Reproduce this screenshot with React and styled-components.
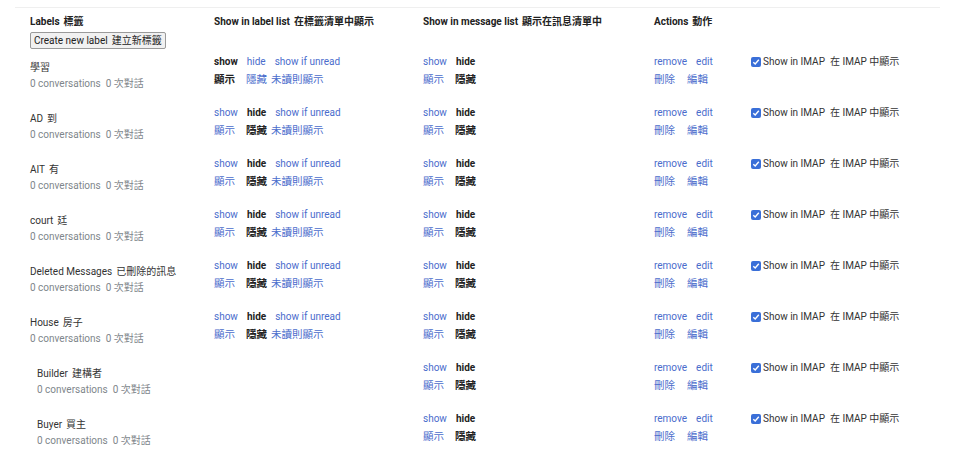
import React from "react";
import styled, { createGlobalStyle } from "styled-components";

const GlobalStyle = createGlobalStyle`
  body {
    margin: 0;
    background: #fff;
    font-family: Roboto, "Noto Sans CJK TC", "Noto Sans", sans-serif;
    font-size: 10px;
    color: #222;
  }
`;

const Page = styled.div`
  margin: 7px 20px 0 15px;
  border-top: 1px solid #efefef;
  padding-left: 15px;
`;

const Grid = styled.div`
  display: grid;
  grid-template-columns: 184px 209px 231px 97px 1fr;
  align-items: start;
`;

const HeadRow = styled(Grid)`
  padding-top: 6px;
  height: 44px;
  box-sizing: border-box;
`;

const HeadCell = styled.div`
  font-weight: 700;
  line-height: 16px;
  color: #222;
`;

const CreateButton = styled.button`
  display: block;
  margin-top: 2px;
  height: 17px;
  padding: 0 3px;
  font-family: inherit;
  font-size: 10px;
  line-height: 15px;
  color: #222;
  background: #f1f1f1;
  border: 1px solid #9a9a9a;
  border-radius: 2px;
`;

const Row = styled(Grid)`
  height: 51px;
`;

const NameCell = styled.div`
  padding-top: 8px;
  padding-left: ${(p) => (p.$child ? "7px" : "0")};
  line-height: 16px;
`;

const Name = styled.div`
  color: #333;
`;

const Count = styled.div`
  color: #80868b;
`;

const Zh = styled.span`
  margin-left: ${(p) => p.$gap || 4}px;
`;

const LinkCell = styled.div`
  padding-top: 1px;
  line-height: 18px;
`;

const Line = styled.div`
  display: flex;
  gap: 9px;
  white-space: nowrap;
`;

const ZhLine = styled.div`
  display: flex;
  font-size: 10.5px;
  white-space: nowrap;
`;

const Link = styled.span`
  color: ${(p) => (p.$active ? "#222" : "#4a6ccc")};
  font-weight: ${(p) => (p.$active ? 700 : 400)};
  margin-left: ${(p) => p.$gap || 0}px;
`;

const Imap = styled.div`
  padding-top: 1px;
  line-height: 18px;
  display: flex;
  align-items: center;
  color: #333;
  white-space: nowrap;
`;

const Check = styled.span`
  width: 10px;
  height: 10px;
  margin-right: 2px;
  border-radius: 2px;
  background: #3a6fd8;
  display: inline-flex;
  align-items: center;
  justify-content: center;
`;

const labels = [
  { name: "學習", zh: "", labelShow: true },
  { name: "AD", zh: "到" },
  { name: "AIT", zh: "有" },
  { name: "court", zh: "廷" },
  { name: "Deleted Messages", zh: "已刪除的訊息" },
  { name: "House", zh: "房子" },
  { name: "Builder", zh: "建構者", child: true },
  { name: "Buyer", zh: "買主", child: true },
];

const LabelListLinks = ({ show }) => (
  <LinkCell>
    <Line>
      <Link $active={show}>show</Link>
      <Link $active={!show}>hide</Link>
      <Link>show if unread</Link>
    </Line>
    <ZhLine>
      <Link $active={show}>顯示</Link>
      <Link $active={!show} $gap={11}>隱藏</Link>
      <Link $gap={4}>未讀則顯示</Link>
    </ZhLine>
  </LinkCell>
);

const MessageListLinks = () => (
  <LinkCell>
    <Line>
      <Link>show</Link>
      <Link $active>hide</Link>
    </Line>
    <ZhLine>
      <Link>顯示</Link>
      <Link $active $gap={11}>隱藏</Link>
    </ZhLine>
  </LinkCell>
);

const ActionLinks = () => (
  <LinkCell>
    <Line>
      <Link>remove</Link>
      <Link>edit</Link>
    </Line>
    <ZhLine>
      <Link>刪除</Link>
      <Link $gap={12}>編輯</Link>
    </ZhLine>
  </LinkCell>
);

const ImapToggle = () => (
  <Imap>
    <Check>
      <svg width="8" height="8" viewBox="0 0 8 8">
        <path
          d="M1.3 4.2 L3.2 6 L6.8 1.8"
          fill="none"
          stroke="#fff"
          strokeWidth="1.4"
        />
      </svg>
    </Check>
    Show in IMAP
    <Zh $gap={5}>在 IMAP 中顯示</Zh>
  </Imap>
);

export default function App() {
  return (
    <>
      <GlobalStyle />
      <Page>
        <HeadRow>
          <div>
            <HeadCell>
              Labels<Zh>標籤</Zh>
            </HeadCell>
            <CreateButton>
              Create new label<Zh>建立新標籤</Zh>
            </CreateButton>
          </div>
          <HeadCell>
            Show in label list<Zh>在標籤清單中顯示</Zh>
          </HeadCell>
          <HeadCell>
            Show in message list<Zh>顯示在訊息清單中</Zh>
          </HeadCell>
          <HeadCell>
            Actions<Zh>動作</Zh>
          </HeadCell>
          <div />
        </HeadRow>
        {labels.map((l) => (
          <Row key={l.name}>
            <NameCell $child={l.child}>
              <Name>
                {l.name}
                {l.zh && <Zh>{l.zh}</Zh>}
              </Name>
              <Count>
                0 conversations<Zh $gap={5}>0 次對話</Zh>
              </Count>
            </NameCell>
            {l.child ? <div /> : <LabelListLinks show={l.labelShow} />}
            <MessageListLinks />
            <ActionLinks />
            <ImapToggle />
          </Row>
        ))}
      </Page>
    </>
  );
}
